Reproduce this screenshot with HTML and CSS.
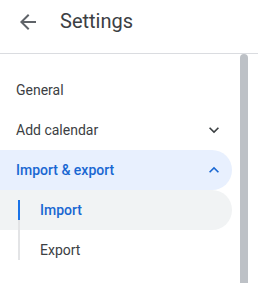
FILE: index.html
```html
<!DOCTYPE html>
<html lang="en">

<head>
    <meta charset="UTF-8">
    <meta name="viewport" content="width=device-width, initial-scale=1.0">
    <title>Settings</title>
    <link rel="stylesheet" href="styles.css">
</head>

<body>
    <header class="topbar">
        <button class="back-btn" aria-label="Back">
            <svg width="24" height="24" viewBox="0 0 24 24">
                <path d="M20 11H7.83l5.59-5.59L12 4l-8 8 8 8 1.41-1.41L7.83 13H20v-2z" fill="#5f6368" />
            </svg>
        </button>
        <h1 class="title">Settings</h1>
    </header>

    <div class="main">
        <nav class="side-nav">
            <div class="nav-item">General</div>
            <div class="nav-item">
                <span>Add calendar</span>
                <svg class="chev" width="20" height="20" viewBox="0 0 24 24">
                    <path d="M16.59 8.59L12 13.17 7.41 8.59 6 10l6 6 6-6z" fill="#3c4043" />
                </svg>
            </div>
            <div class="nav-item open">
                <span>Import &amp; export</span>
                <svg class="chev" width="20" height="20" viewBox="0 0 24 24">
                    <path d="M7.41 15.41L12 10.83l4.59 4.58L18 14l-6-6-6 6z" fill="#1967d2" />
                </svg>
            </div>
            <div class="sub-list">
                <div class="sub-item active">Import</div>
                <div class="sub-item">Export</div>
            </div>
        </nav>
        <div class="scroll-thumb"></div>
    </div>
</body>

</html>
```

FILE: styles.css
```css
body {
    margin: 0;
    font-family: Roboto, "Liberation Sans", Arial, sans-serif;
    color: #3c4043;
    background-color: #fff;
    overflow: hidden;
}

.topbar {
    display: flex;
    align-items: center;
    height: 53px;
    padding-left: 16px;
    border-bottom: 1px solid #dadce0;
}

.back-btn {
    border: none;
    background: none;
    padding: 0;
    width: 24px;
    height: 24px;
    margin-top: -10px;
    cursor: pointer;
}

.title {
    margin: 0 0 0 20px;
    margin-top: -11px;
    font-size: 20px;
    font-weight: 400;
    color: #3c4043;
}

.main {
    display: flex;
    height: 229px;
}

.side-nav {
    width: 232px;
    padding-top: 16px;
}

.nav-item {
    display: flex;
    align-items: center;
    justify-content: space-between;
    height: 40px;
    padding: 0 8px 0 16px;
    font-size: 14px;
    border-radius: 0 20px 20px 0;
}

.nav-item.open {
    background-color: #e8f0fe;
    color: #1967d2;
    font-weight: 500;
}

.sub-list {
    position: relative;
}

/* grey track on the left of the sub items */
.sub-list::after {
    content: "";
    position: absolute;
    left: 18px;
    top: 10px;
    bottom: 10px;
    width: 2px;
    background-color: #e3e4e6;
}

.sub-item {
    height: 40px;
    line-height: 40px;
    padding-left: 40px;
    font-size: 14px;
    border-radius: 0 20px 20px 0;
    position: relative;
}

.sub-item.active {
    background-color: #f1f3f4;
    color: #1967d2;
    font-weight: 500;
}

.sub-item.active::before {
    content: "";
    position: absolute;
    left: 18px;
    top: 10px;
    bottom: 10px;
    width: 2px;
    background-color: #1a73e8;
    z-index: 1;
}

.scroll-thumb {
    width: 8px;
    margin-left: 8px;
    height: 240px;
    background-color: #bdc1c6;
    border-radius: 4px 4px 0 0;
}
```
